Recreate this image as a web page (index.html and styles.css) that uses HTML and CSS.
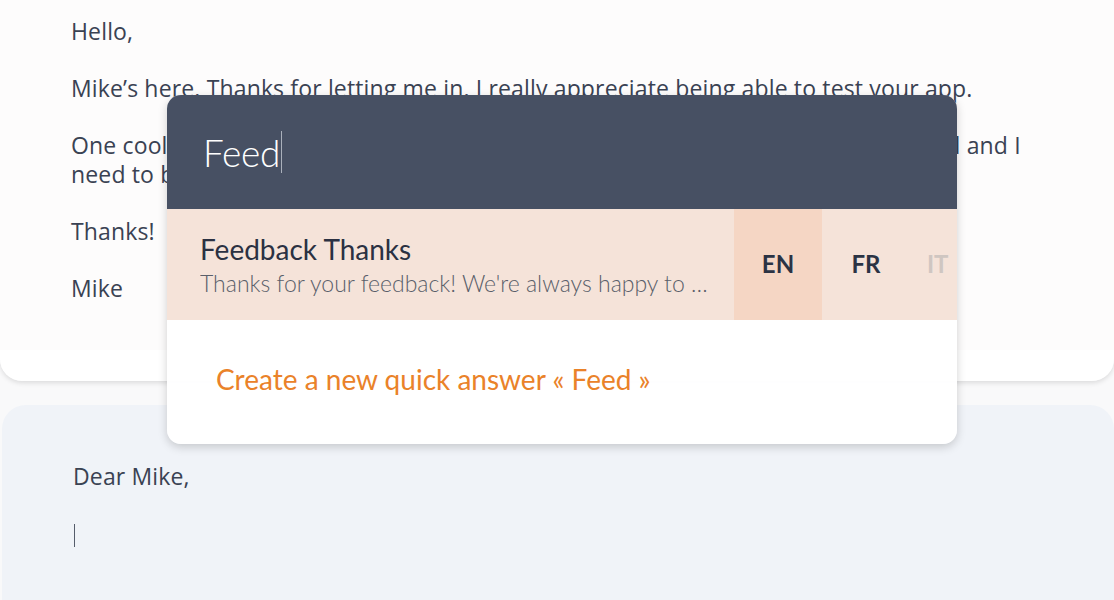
FILE: index.html
```html
<!DOCTYPE html>
<html>
<head>
<meta charset="utf-8">
<link rel="stylesheet" href="styles.css">
</head>
<body>
<div class="page">
  <div class="card-top">
    <div class="mail">
      <p>Hello,</p>
      <p>Mike’s here. Thanks for letting me in. I really appreciate being able to test your app.</p>
      <p>One cool thing I’m missing: built-in translation. I have customers all over the world and I need to be able to send them localized answer.</p>
      <p>Thanks!</p>
      <p>Mike</p>
    </div>
  </div>
  <div class="card-reply">
    <p>Dear Mike,</p>
    <div class="cursor"></div>
  </div>

  <div class="popup">
    <div class="search"><span class="query">Feed</span><span class="caret"></span></div>
    <div class="result">
      <div class="result-text">
        <div class="result-title">Feedback Thanks</div>
        <div class="result-sub">Thanks for your feedback! We're always happy to hear from our users.</div>
      </div>
      <div class="lang active">EN</div>
      <div class="lang">FR</div>
      <div class="lang faded">IT</div>
    </div>
    <div class="create">Create a new quick answer « Feed »</div>
  </div>
</div>
</body>
</html>
```

FILE: styles.css
```css
html, body {
  margin: 0;
  padding: 0;
}
body {
  background: #f9f9fa;
  font-family: Lato, "Open Sans", sans-serif;
  color: #3a4253;
  overflow: hidden;
}
.page {
  position: relative;
  width: 1114px;
  height: 600px;
  overflow: hidden;
}
.card-top {
  height: 381px;
  box-sizing: border-box;
  background: linear-gradient(#fdfcfc 350px, #ffffff 350px);
  border-radius: 0 0 22px 22px;
  box-shadow: 0 2px 5px rgba(0, 0, 0, 0.12);
  padding: 17px 74px 0 71px;
}
.mail p {
  margin: 0 0 28px;
  font-family: "Open Sans", Lato, sans-serif;
  font-size: 23px;
  letter-spacing: 0.15px;
  line-height: 29px;
}
.card-reply {
  margin: 24px 0 0 2px;
  height: 220px;
  background: #f0f3f8;
  border-radius: 24px 24px 0 0;
  padding: 57px 71px 0;
}
.card-reply p {
  margin: 0;
  font-family: "Open Sans", Lato, sans-serif;
  font-size: 23px;
  letter-spacing: 0.15px;
  line-height: 29px;
}
.cursor {
  margin: 33px 0 0 1px;
  width: 1px;
  height: 23px;
  background: #555c6b;
}
.popup {
  position: absolute;
  left: 167px;
  top: 95px;
  width: 790px;
  height: 349px;
  border-radius: 14px;
  overflow: hidden;
  box-shadow: 0 3px 10px rgba(0, 0, 0, 0.18);
  background: rgba(255, 255, 255, 0.96);
  display: flex;
  flex-direction: column;
}
.search {
  height: 114px;
  flex: none;
  background: rgba(63, 73, 93, 0.96);
  display: flex;
  align-items: center;
  padding-left: 36px;
}
.query {
  font-size: 37px;
  font-weight: 300;
  color: #ffffff;
  letter-spacing: -0.3px;
}
.caret {
  width: 1px;
  height: 42px;
  background: #aab0bb;
  margin-left: 1px;
}
.result {
  height: 111px;
  flex: none;
  display: flex;
  background: #f5e3d9;
}
.result-text {
  flex: 1;
  min-width: 0;
  padding: 23px 26px 0 33px;
}
.result-title {
  font-size: 28px;
  line-height: 34px;
  color: #2b3142;
}
.result-sub {
  margin-top: 3px;
  font-size: 23px;
  line-height: 28px;
  font-weight: 300;
  color: #5a5f6a;
  white-space: nowrap;
  overflow: hidden;
  text-overflow: ellipsis;
}
.lang {
  width: 88px;
  flex: none;
  display: flex;
  align-items: center;
  justify-content: center;
  font-size: 24px;
  font-weight: 700;
  color: #2b3344;
  padding-bottom: 2px;
  box-sizing: border-box;
}
.lang.active {
  background: #f5d6c4;
}
.lang.faded {
  width: 47px;
  justify-content: flex-start;
  padding-left: 17px;
  color: #cfc6c1;
}
.create {
  flex: 1;
  padding: 42px 0 0 49px;
  font-size: 28px;
  line-height: 34px;
  color: #ea8229;
}
```
